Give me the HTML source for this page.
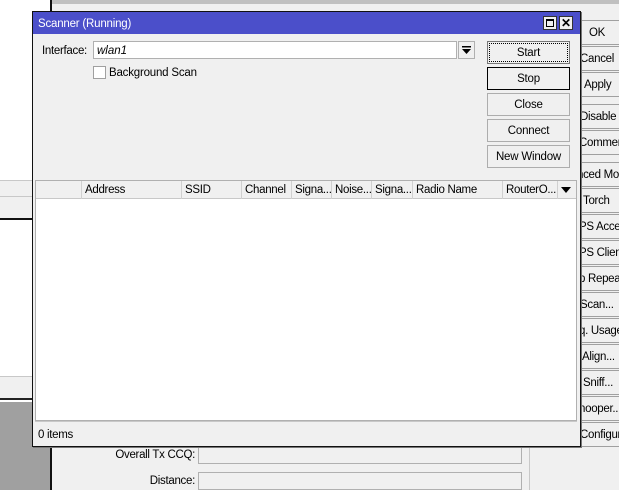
<!DOCTYPE html>
<html><head><style>
*{margin:0;padding:0;box-sizing:border-box}
body{width:619px;height:490px;position:relative;overflow:hidden;background:#fff;font-family:"Liberation Sans",sans-serif;font-size:11px;color:#000}
.a{position:absolute}
.rb{position:absolute;left:578px;width:50px;height:25px;background:#f0f0f0;border:1px solid #a0a0a0;padding-left:2px;line-height:25px;font-size:11.5px;white-space:nowrap;overflow:hidden;letter-spacing:-0.3px}
.btn{position:absolute;left:487px;width:83px;height:23px;background:#f0f0f0;border:1px solid #adadad;text-align:center;line-height:23px;font-size:11.5px;letter-spacing:-0.2px}
.th{position:absolute;top:0;height:18px;border-right:1px solid #d0d0d0;line-height:19px;padding-left:3px;white-space:nowrap;overflow:hidden;font-size:11.5px;letter-spacing:-0.3px}
</style></head><body>
<div class="a" style="left:0;top:180px;width:33px;height:17px;background:#f0f0f0;border-top:1px solid #c8c8c8;border-bottom:1px solid #c8c8c8"></div>
<div class="a" style="left:0;top:197px;width:33px;height:23px;background:#f0f0f0;border-bottom:2px solid #111"></div>
<div class="a" style="left:0;top:376px;width:33px;height:24px;background:#f0f0f0;border-top:1px solid #c8c8c8;border-bottom:2px solid #222"></div>
<div class="a" style="left:0;top:402px;width:51px;height:88px;background:#a0a0a0"></div>
<div class="a" style="left:50px;top:0;width:2px;height:11px;background:#111"></div>
<div class="a" style="left:52px;top:0;width:567px;height:4px;background:#c0c0c0"></div>
<div class="a" style="left:52px;top:4px;width:567px;height:8px;background:#f0f0f0"></div>
<div class="a" style="left:50px;top:446px;width:2px;height:44px;background:#111"></div>
<div class="a" style="left:52px;top:446px;width:567px;height:44px;background:#f0f0f0"></div>
<div class="a" style="left:529px;top:446px;width:1px;height:44px;background:#c8c8c8"></div>
<div class="a" style="left:60px;top:449px;width:135px;text-align:right;font-size:11.5px;letter-spacing:-0.3px">Overall Tx CCQ:</div>
<div class="a" style="left:198px;top:446px;width:324px;height:18px;border:1px solid #b0b0b0"></div>
<div class="a" style="left:60px;top:475px;width:135px;text-align:right;font-size:11.5px;letter-spacing:-0.3px">Distance:</div>
<div class="a" style="left:198px;top:472px;width:324px;height:18px;border:1px solid #b0b0b0"></div>
<div class="a" style="left:576px;top:12px;width:43px;height:436px;background:#f0f0f0"></div>
<div class="rb" style="top:20px;padding-left:10px">OK</div>
<div class="rb" style="top:46px;padding-left:1px">Cancel</div>
<div class="rb" style="top:72px;padding-left:5px">Apply</div>
<div class="rb" style="top:104px;padding-left:1px">Disable</div>
<div class="rb" style="top:130px;padding-left:0">Comment</div>
<div class="rb" style="top:162px;padding-left:0;text-indent:-2px">nced Mo</div>
<div class="rb" style="top:188px;padding-left:4px">Torch</div>
<div class="rb" style="top:214px;padding-left:0">PS Acce</div>
<div class="rb" style="top:240px;padding-left:0">PS Clien</div>
<div class="rb" style="top:266px;padding-left:0">p Repea</div>
<div class="rb" style="top:292px;padding-left:1px">Scan...</div>
<div class="rb" style="top:318px;padding-left:0">q. Usage</div>
<div class="rb" style="top:344px;padding-left:3px">Align...</div>
<div class="rb" style="top:370px;padding-left:4px">Sniff...</div>
<div class="rb" style="top:396px;padding-left:0">nooper...</div>
<div class="rb" style="top:422px;padding-left:1px">Configur</div>
<div class="a" style="left:32px;top:11px;width:549px;height:436px;background:#f0f0f0;border:1px solid #111;box-shadow:1px 1px 0 #777"></div>
<div class="a" style="left:33px;top:12px;width:547px;height:22px;background:#4b4fca;color:#fff;font-size:11.5px;line-height:24px;padding-left:5px;letter-spacing:-0.2px">Scanner (Running)</div>
<div class="a" style="left:543px;top:16px;width:14px;height:14px;background:#f0f0f0;border:1px solid #333"><div class="a" style="left:2px;top:2px;width:8px;height:8px;border:1px solid #000;border-top-width:2px"></div></div>
<div class="a" style="left:559px;top:16px;width:14px;height:14px;background:#f0f0f0;border:1px solid #333;font-weight:bold;font-size:12px;line-height:12px;text-align:center">✕</div>
<div class="a" style="left:42px;top:45px;font-size:11.5px;letter-spacing:-0.3px">Interface:</div>
<div class="a" style="left:93px;top:41px;width:364px;height:18px;background:#fff;border:1px solid #b0b0b0;font-style:italic;padding-left:3px;line-height:18px;font-size:11.5px">wlan1</div>
<div class="a" style="left:458px;top:41px;width:17px;height:18px;border:1px solid #b0b0b0;background:#f0f0f0"></div>
<svg class="a" style="left:458px;top:41px" width="17" height="18"><rect x="4" y="5" width="9" height="1.5" fill="#000"/><path d="M4 8 L13 8 L8.5 13 Z" fill="#000"/></svg>
<div class="a" style="left:93px;top:66px;width:13px;height:13px;background:#fff;border:1px solid #a0a0a0"></div>
<div class="a" style="left:109px;top:67px;font-size:11.5px;letter-spacing:-0.2px">Background Scan</div>
<div class="btn" style="top:41px;border-color:#777"><div style="position:absolute;inset:1px;border:1px dotted #000"></div>Start</div>
<div class="btn" style="top:67px;border-color:#000">Stop</div>
<div class="btn" style="top:93px">Close</div>
<div class="btn" style="top:119px">Connect</div>
<div class="btn" style="top:145px">New Window</div>
<div class="a" style="left:35px;top:180px;width:542px;height:241px;background:#fff;border:1px solid #b0b0b0"></div>
<div class="a" style="left:36px;top:181px;width:540px;height:18px;background:#f0f0f0;border-bottom:1px solid #c8c8c8">
<div class="th" style="left:0;width:46px"></div>
<div class="th" style="left:46px;width:100px">Address</div>
<div class="th" style="left:146px;width:60px">SSID</div>
<div class="th" style="left:206px;width:50px">Channel</div>
<div class="th" style="left:256px;width:40px">Signa...</div>
<div class="th" style="left:296px;width:40px">Noise...</div>
<div class="th" style="left:336px;width:41px">Signa...</div>
<div class="th" style="left:377px;width:90px">Radio Name</div>
<div class="th" style="left:467px;width:55px">RouterO...</div>
<svg class="a" style="left:524px;top:5px" width="12" height="8"><path d="M1 1 L11 1 L6 7 Z" fill="#000"/></svg>
</div>
<div class="a" style="left:35px;top:421px;width:542px;height:24px;background:#f0f0f0;border-top:1px solid #c8c8c8;padding-left:3px;line-height:26px;font-size:11.5px;letter-spacing:-0.3px">0 items</div>
</body></html>
